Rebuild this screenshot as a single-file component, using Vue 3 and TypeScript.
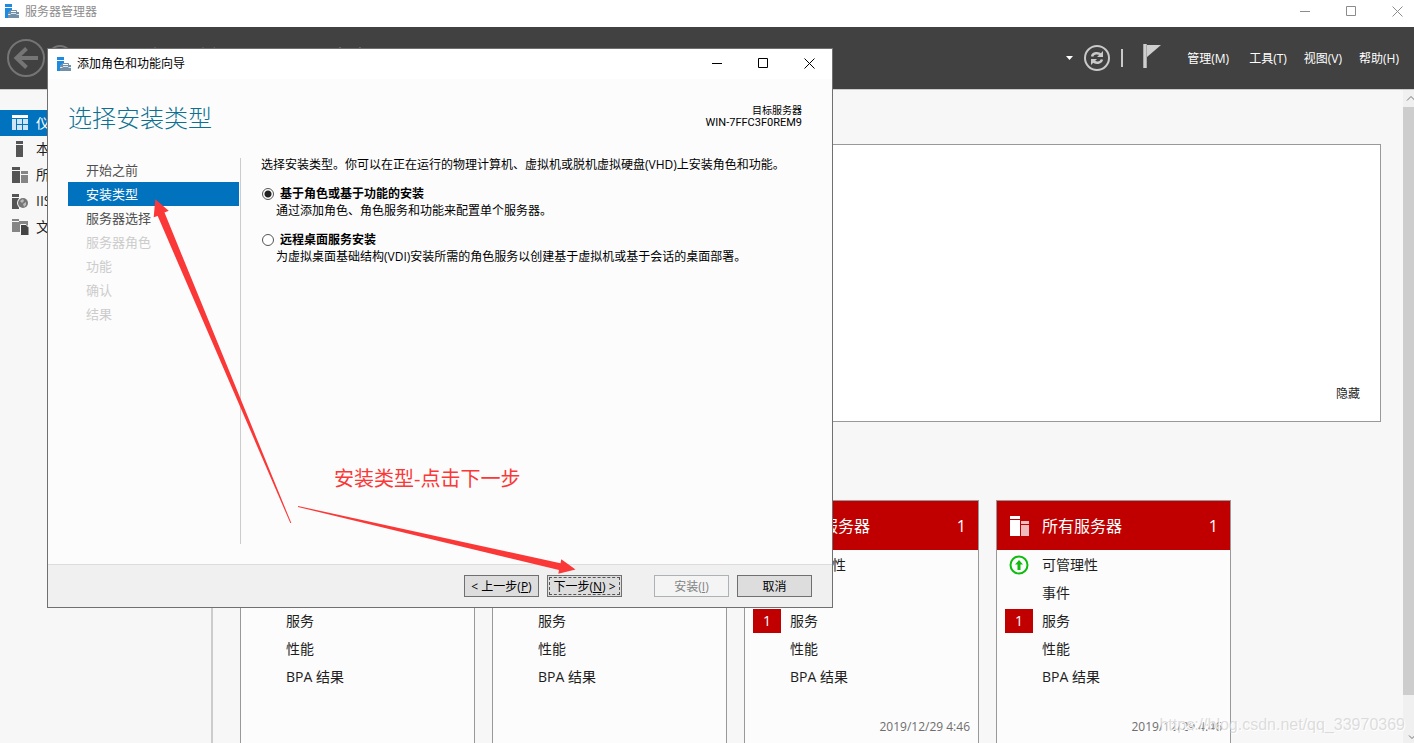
<script setup lang="ts">
import { ref } from 'vue'

interface Step { label: string; state: 'done' | 'current' | 'todo' }
interface Tile { title: string; count: number; rows: { label: string; mark?: 'ok' | 'alert' }[]; time: string }

const steps: Step[] = [
  { label: '开始之前', state: 'done' },
  { label: '安装类型', state: 'current' },
  { label: '服务器选择', state: 'done' },
  { label: '服务器角色', state: 'todo' },
  { label: '功能', state: 'todo' },
  { label: '确认', state: 'todo' },
  { label: '结果', state: 'todo' },
]

const rows = (alert: boolean): Tile['rows'] => [
  { label: '可管理性', mark: 'ok' },
  { label: '事件' },
  { label: '服务', mark: alert ? 'alert' : undefined },
  { label: '性能' },
  { label: 'BPA 结果' },
]

const tiles: Tile[] = [
  { title: 'IIS', count: 1, rows: rows(false), time: '' },
  { title: '文件和存储服务', count: 1, rows: rows(false), time: '' },
  { title: '本地服务器', count: 1, rows: rows(true), time: '2019/12/29 4:46' },
  { title: '所有服务器', count: 1, rows: rows(true), time: '2019/12/29 4:46' },
]

const places = [
  { id: 'dash', label: '仪表板' },
  { id: 'local', label: '本地服务器' },
  { id: 'all', label: '所有服务器' },
  { id: 'iis', label: 'IIS' },
  { id: 'files', label: '文件和存储服务' },
]

const menus = ['管理(M)', '工具(T)', '视图(V)', '帮助(H)']
const kind = ref('role')
</script>

<template>
  <div class="app">
    <header class="titlebar">
      <svg class="logo" width="15" height="15" viewBox="0 0 15 15">
        <path d="M0 0h7v3H0zM0 4h7v2L3 9v5H0z" fill="#1e8ae0" />
        <path d="M3 8h11v6H3z" fill="#7291a8" />
        <path d="M5.500 8V6.500h6V8" fill="none" stroke="#7291a8" />
        <path d="M3 10.500h2.500m6 0H14M6 9.500h5" fill="none" stroke="#dce6ee" />
      </svg>
      <span class="titletext">服务器管理器</span>
      <div class="winbtns">
        <button type="button" aria-label="最小化"><svg width="11" height="11"><path d="M0 5.500h10" /></svg></button>
        <button type="button" aria-label="最大化"><svg width="11" height="11"><path d="M.5.5h9v9h-9z" /></svg></button>
        <button type="button" aria-label="关闭"><svg width="11" height="11"><path d="M.5.5l10 10m0-10l-10 10" /></svg></button>
      </div>
    </header>

    <div class="ribbon">
      <button type="button" class="round" aria-label="后退">
        <svg width="38" height="38" viewBox="0 0 38 38" fill="none" stroke="#757575">
          <circle cx="19" cy="19" r="18" stroke-width="2" />
          <path d="M31 19H10" stroke-width="4" />
          <path d="M19.500 9.500L9.500 19l10 9.500" stroke-width="4" />
        </svg>
      </button>
      <button type="button" class="round" aria-label="前进">
        <svg width="26" height="26" viewBox="0 0 26 26" fill="none" stroke="#757575">
          <circle cx="13" cy="13" r="12" stroke-width="2" /><path d="M6 13h13m-6-6l6 6-6 6" stroke-width="2" />
        </svg>
      </button>
      <h1 class="crumb">服务器管理器 · 仪表板</h1>
      <div class="tools">
        <svg class="caret" width="8" height="5"><path d="M0 0h7L3.500 4z" fill="#fff" /></svg>
        <button type="button" class="round" aria-label="刷新">
          <svg width="28" height="28" viewBox="0 0 28 28" fill="none" stroke="#c9c9c9">
            <circle cx="14" cy="14" r="12" stroke-width="2" />
            <path d="M9 12.500C10 9 15 8 18 11M19 15.500C18 19 13 20 10 17" stroke-width="2.500" />
            <path d="M20 7v6h-6zM8 21v-6h6z" fill="#c9c9c9" stroke="none" />
          </svg>
        </button>
        <span class="bar"></span>
        <button type="button" class="round flag" aria-label="通知">
          <svg width="18" height="25" viewBox="0 0 18 25"><path d="M0 0h4v24H0z" fill="#a8a8a8" /><path d="M1 0h2v24H1zM4 1h14L4 13z" fill="#cfcfcf" /></svg>
        </button>
        <nav class="menus">
          <button v-for="m in menus" :key="m" type="button">{{ m }}</button>
        </nav>
      </div>
    </div>

    <div class="body">
      <nav class="places">
        <a v-for="(p, i) in places" :key="p.id" href="#" :class="{ on: i === 0 }">
          <svg width="18" height="18" viewBox="0 0 18 18">
            <template v-if="p.id === 'dash'"><path d="M1 1h16v3H1z" fill="#fff" /><path d="M1 5h4v11H1zM6 5h5v5H6zM12 5h5v5h-5zM6 11h5v5H6zM12 11h5v5h-5z" fill="#cfe4f4" /></template>
            <template v-else-if="p.id === 'local'"><path d="M5 1h7v3H5zM5 5h7v12H5z" fill="#555" /></template>
            <template v-else-if="p.id === 'all'"><path d="M1 1h8v3H1zM1 5h8v12H1z" fill="#555" /><path d="M10 5h7v3h-7zM10 9h7v8h-7z" fill="#858585" /></template>
            <template v-else-if="p.id === 'iis'"><path d="M1 2h7v3H1zM1 6h7v11H1z" fill="#555" /><circle cx="12" cy="11" r="6" fill="#f7f7f7" /><circle cx="12" cy="11" r="5" fill="#777" /><path d="M9 9l3-2 1 2-2 2zM12 12l3-2v3l-2 2z" fill="#bbb" /></template>
            <template v-else><path d="M1 1h7v2h9v5h-7v6H1z" fill="#858585" /><path d="M1 3.500h7" stroke="#f7f7f7" /><path d="M9.500 6.500h5.500l3 3v8h-8.500z" fill="#444" stroke="#f7f7f7" /></template>
          </svg>
          <span>{{ p.label }}</span>
        </a>
      </nav>
      <main class="board">
        <section class="welcome"><button type="button">隐藏</button></section>
        <div class="tiles">
          <article v-for="t in tiles" :key="t.title" class="tile">
            <header>
              <svg width="20" height="20" viewBox="0 0 20 20"><path d="M0 0h10v3H0zM0 4h10v16H0z" fill="#fff" /><path d="M11 5h8v3h-8zM11 9h8v11h-8z" fill="#eebcbc" /></svg>
              <h2>{{ t.title }}</h2><span>{{ t.count }}</span>
            </header>
            <ul>
              <li v-for="r in t.rows" :key="r.label">
                <span class="mark">
                  <svg v-if="r.mark === 'ok'" width="20" height="20" viewBox="0 0 20 20"><circle cx="10" cy="10" r="8.500" fill="none" stroke="#0fbb0f" stroke-width="2" /><path d="M10 5l4 4.500h-2.500V15h-3V9.500H6z" fill="#0fbb0f" /></svg>
                  <b v-else-if="r.mark === 'alert'">1</b>
                </span>
                <a href="#">{{ r.label }}</a>
              </li>
            </ul>
            <time>{{ t.time }}</time>
          </article>
        </div>
      </main>
      <div class="scroll">
        <svg width="11" height="17"><path d="M4 10.500l4-4 4 4" /></svg>
        <span class="thumb"></span>
        <svg width="11" height="17"><path d="M6 9.500l3 3 3-3" /></svg>
      </div>
    </div>

    <section class="dialog" role="dialog" aria-labelledby="wizard-name">
      <header class="dlgbar">
        <svg class="logo" width="15" height="15" viewBox="0 0 15 15">
          <path d="M0 0h7v3H0zM0 4h7v2L3 9v5H0z" fill="#1e8ae0" />
          <path d="M3 8h11v6H3z" fill="#7291a8" />
          <path d="M5.500 8V6.500h6V8" fill="none" stroke="#7291a8" />
          <path d="M3 10.500h2.500m6 0H14M6 9.500h5" fill="none" stroke="#dce6ee" />
        </svg>
        <span id="wizard-name" class="titletext">添加角色和功能向导</span>
        <div class="winbtns">
          <button type="button" aria-label="最小化"><svg width="11" height="11"><path d="M0 5.500h10" /></svg></button>
          <button type="button" aria-label="最大化"><svg width="11" height="11"><path d="M.5.5h9v9h-9z" /></svg></button>
          <button type="button" aria-label="关闭"><svg width="11" height="11"><path d="M.5.5l10 10m0-10l-10 10" /></svg></button>
        </div>
      </header>
      <div class="dlghead">
        <h2>选择安装类型</h2>
        <p>目标服务器<br><span>WIN-7FFC3F0REM9</span></p>
      </div>
      <div class="dlgmain">
        <ol class="steps">
          <li v-for="s in steps" :key="s.label" :class="s.state">{{ s.label }}</li>
        </ol>
        <form class="choices">
          <p>选择安装类型。你可以在正在运行的物理计算机、虚拟机或脱机虚拟硬盘(VHD)上安装角色和功能。</p>
          <div class="choice">
            <input id="k-role" v-model="kind" type="radio" name="kind" value="role">
            <label for="k-role">基于角色或基于功能的安装</label>
            <p>通过添加角色、角色服务和功能来配置单个服务器。</p>
          </div>
          <div class="choice">
            <input id="k-rds" v-model="kind" type="radio" name="kind" value="rds">
            <label for="k-rds">远程桌面服务安装</label>
            <p>为虚拟桌面基础结构(VDI)安装所需的角色服务以创建基于虚拟机或基于会话的桌面部署。</p>
          </div>
        </form>
      </div>
      <footer class="dlgfoot">
        <button type="button">&lt; 上一步(<u>P</u>)</button>
        <button type="button" class="focus">下一步(<u>N</u>) &gt;</button>
        <button type="button" class="install" disabled>安装(<u>I</u>)</button>
        <button type="button">取消</button>
      </footer>
    </section>

    <svg class="arrows" width="600" height="600" viewBox="0 0 600 600" fill="#fb3838">
      <path d="M155.300 199.300L168.700 210.700 164.500 212.600 291.300 523 290.300 523 157.700 216 153.700 217.300z" />
      <path d="M298 506L560.500 563.300 561.300 559.300 575.500 569.400 558.300 573.700 559 570 298 507z" />
    </svg>
    <p class="note">安装类型-点击下一步</p>
    <p class="watermark">https://blog.csdn.net/qq_33970369</p>
  </div>
</template>

<style>
html, body { margin: 0; background: #f7f7f7; }
</style>

<style scoped>
.app {
  position: relative;
  display: flex;
  flex-direction: column;
  height: 100vh;
  overflow: hidden;
  background: #f7f7f7;
  color: #1e1e1e;
  font: 12px/16px "Open Sans", "Noto Sans CJK SC", sans-serif;
}
h1, h2, p, ul, ol { margin: 0; padding: 0; list-style: none; font-weight: 400; }
button { margin: 0; padding: 0; border: 0; background: none; color: inherit; font: inherit; }
a { color: inherit; text-decoration: none; }
svg { display: block; flex: none; }

.titlebar, .dlgbar { display: flex; align-items: center; background: #fff; }
.titlebar { flex: none; height: 27px; padding-left: 5px; color: #8c8c8c; }
.titlebar .titletext { margin: 0 auto 4px 5px; }
.titlebar .logo { margin-bottom: 4px; }
.winbtns { display: flex; stroke: currentColor; fill: none; }
.winbtns button { display: flex; justify-content: center; width: 46px; }
.titlebar .winbtns { margin: 0 -6px 4px 0; }

.ribbon { display: flex; align-items: center; flex: none; height: 62px; padding-left: 7px; background: #414141; color: #fff; border-bottom: 1px solid #ccc; }
.ribbon .round { margin-right: 2px; }
.crumb { padding-top: 6px; margin-left: 42px; font-size: 27px; font-weight: 300; line-height: 36px; }
.tools { display: flex; align-items: center; margin-left: auto; padding-right: 15px; }
.caret { margin-right: 9px; }
.bar { width: 2px; height: 18px; margin: 0 20px 0 8px; background: #c9c9c9; }
.flag { margin-bottom: 4px; }
.menus { display: flex; gap: 17px; margin-left: 24px; padding-top: 2px; }
.menus button:first-child { margin-right: 3px; }

.body { display: flex; flex: 1; min-height: 0; }
.places { box-sizing: border-box; flex: none; width: 213px; padding-top: 20px; border-right: 2px solid #ccc; }
.places a { display: flex; align-items: center; gap: 7px; height: 26px; padding-left: 11px; font-size: 14px; }
.places .on { background: #0072be; color: #fff; }
.board { flex: 1; min-width: 0; padding: 54px 22px 0 27px; }
.welcome { display: flex; align-items: flex-end; justify-content: flex-end; box-sizing: border-box; height: 278px; padding: 0 20px 19px; background: #fff; border: 1px solid #999; }
.tiles { display: flex; gap: 17px; margin-top: 78px; }
.tile { box-sizing: border-box; flex: none; display: flex; flex-direction: column; width: 235px; height: 270px; background: #fcfcfc; border: 1px solid #999; }
.tile header { display: flex; align-items: center; height: 49px; padding: 0 12px 0 13px; background: #c00000; color: #fff; font-size: 16px; }
.tile h2 { flex: 1; margin-left: 12px; font-size: 16px; }
.tile ul { padding-top: 1px; }
.tile li { display: flex; align-items: center; height: 28px; font-size: 14px; }
.mark { display: flex; justify-content: center; width: 28px; margin: 0 9px 0 8px; }
.mark b { width: 28px; background: #c00000; color: #fff; font-weight: 400; line-height: 24px; text-align: center; }
.tile time { margin: 28px 8px 0; color: #6e6e6e; text-align: right; }
.scroll { display: flex; flex-direction: column; flex: none; width: 11px; background: #f0f0f0; fill: none; stroke: #777; }
.thumb { flex: 1; margin-bottom: 31px; background: #cdcdcd; }

.dialog { position: absolute; left: 47px; top: 48px; display: flex; flex-direction: column; box-sizing: border-box; width: 786px; height: 560px; background: #fcfcfc; border: 1px solid #707070; color: #000; }
.dlgbar { flex: none; height: 30px; padding-left: 9px; }
.dlgbar .titletext { margin: 0 auto 0 5px; }
.dlgbar .winbtns { margin-bottom: 2px; }
.dlghead { display: flex; justify-content: space-between; flex: none; height: 79px; padding: 0 30px 0 20px; }
.dlghead h2 { padding-top: 23px; color: #0b7091; font-size: 24px; font-weight: 300; line-height: 32px; }
.dlghead p { padding-top: 25px; font-size: 10px; line-height: 12px; text-align: right; }
.dlghead span { font-family: Roboto, sans-serif; font-size: 11px; }
.dlgmain { display: flex; flex: 1; padding: 0 20px; }
.steps { width: 171px; height: 386px; padding-right: 1px; border-right: 1px solid #ccc; font-size: 13px; line-height: 24px; }
.steps li { padding-left: 18px; color: #505050; }
.steps .current { background: #0072be; color: #fff; }
.steps .todo { color: #ccc; }
.choices { margin-top: -1px; padding-left: 20px; }
.choice { display: grid; grid-template-columns: 14px auto; column-gap: 5px; align-items: center; margin-top: 12px; line-height: 17px; }
.choice label { font-weight: 700; }
.choice p { grid-column: 1 / 3; padding-left: 15px; }
.choice input { appearance: none; box-sizing: border-box; width: 12px; height: 12px; margin: 0 1px; border: 1px solid #555; border-radius: 50%; background: #fff; }
.choice input:checked { background: radial-gradient(circle, #222 3px, #fff 4px); }
.dlgfoot { display: flex; justify-content: flex-end; gap: 8px; flex: none; padding: 10px 20px; background: #f0f0f0; border-top: 1px solid #dcdcdc; }
.dlgfoot button { box-sizing: border-box; width: 75px; height: 22px; padding-top: 2px; background: #ddd; border: 1px solid #707070; white-space: nowrap; line-height: 18px; }
.dlgfoot .focus { outline: 1px dashed #555; outline-offset: -3px; }
.dlgfoot .install { margin-left: 24px; background: #f4f4f4; border-color: #adb2b5; color: #838383; }

.arrows { position: absolute; left: 0; top: 0; pointer-events: none; }
.note { position: absolute; left: 334px; top: 465px; color: #fb3838; font-size: 20px; line-height: 28px; }
.watermark { position: absolute; right: 9px; bottom: 8px; color: rgba(200, 200, 200, 0.6); font-family: "Liberation Sans", sans-serif; font-size: 16px; line-height: 20px; text-shadow: 1px 1px 0 #fff; }
</style>
